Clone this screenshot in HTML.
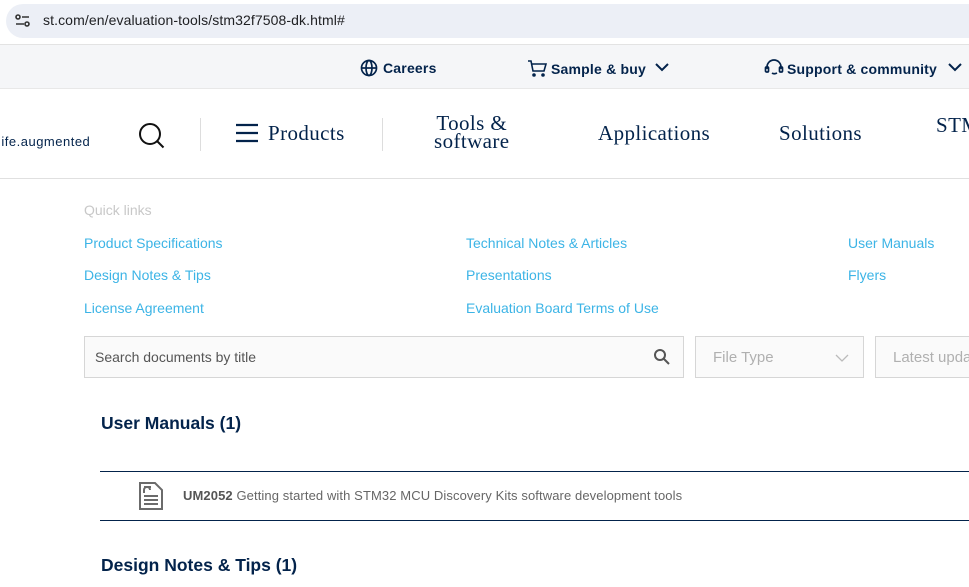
<!DOCTYPE html>
<html><head><meta charset="utf-8"><style>
*{margin:0;padding:0;box-sizing:border-box}
body{width:969px;height:587px;overflow:hidden;background:#fff;font-family:"Liberation Sans",sans-serif;position:relative}
.a{position:absolute;white-space:nowrap}
.pill{left:6px;top:4px;width:980px;height:34px;background:#eceff6;border-radius:17px}
.top{left:0;top:44px;width:969px;height:45px;background:#f5f6f8;border-top:1px solid #e3e3e3;border-bottom:1px solid #e8e8e8}
.tb{font-weight:bold;font-size:14px;color:#03234b;letter-spacing:0.2px}
.nav{font-family:"Liberation Serif","DejaVu Serif",serif;font-size:21px;color:#03234b;letter-spacing:0.4px}
.lk{font-size:14px;color:#3cb4e6}
.sep{width:1px;height:33px;background:#ddd;top:118px}
.box{border:1px solid #d6d6d6;height:42px;top:336px;background:#fafafa;font-size:15px;color:#b0b0b0;padding:12px 0 0 10px}
h2{font-size:17.5px;color:#03234b;font-weight:bold}
</style></head><body>
<div class="a pill"></div>
<svg class="a" style="left:14px;top:13px" width="18" height="16" viewBox="0 0 18 16"><circle cx="4" cy="4" r="2" fill="none" stroke="#333" stroke-width="1.6"/><path d="M8 4h7M2 11h8" stroke="#333" stroke-width="1.6"/><circle cx="13" cy="11" r="2" fill="none" stroke="#333" stroke-width="1.6"/></svg>
<div class="a" style="left:43px;top:12px;font-size:14px;color:#202124;letter-spacing:0.1px">st.com/en/evaluation-tools/stm32f7508-dk.html#</div>
<div class="a top"></div>
<svg class="a" style="left:360px;top:59px" width="18" height="18" viewBox="0 0 18 18" fill="none" stroke="#03234b" stroke-width="1.7"><circle cx="9" cy="9" r="7.5"/><ellipse cx="9" cy="9" rx="3" ry="7.5"/><path d="M1.5 9h15"/></svg>
<div class="a tb" style="left:383px;top:60px">Careers</div>
<svg class="a" style="left:527px;top:59px" width="20" height="19" viewBox="0 0 20 19" fill="none" stroke="#03234b" stroke-width="1.6"><path d="M1 2h3l2 10h11l2-7H5"/><circle cx="7" cy="16" r="1" fill="#03234b"/><circle cx="16" cy="16" r="1" fill="#03234b"/></svg>
<div class="a tb" style="left:551px;top:61px">Sample &amp; buy</div>
<svg class="a" style="left:655px;top:62px" width="14" height="10" viewBox="0 0 14 10" fill="none" stroke="#03234b" stroke-width="2"><path d="M1 2l6 6 6-6"/></svg>
<svg class="a" style="left:764px;top:58px" width="20" height="20" viewBox="0 0 20 20" fill="none" stroke="#03234b" stroke-width="1.7"><path d="M3 11V9a7 7 0 0 1 14 0v2"/><rect x="1.5" y="9" width="3" height="5" rx="1"/><rect x="15.5" y="9" width="3" height="5" rx="1"/><path d="M8 15q2 1.5 5 0"/></svg>
<div class="a tb" style="left:787px;top:61px">Support &amp; community</div>
<svg class="a" style="left:948px;top:62px" width="14" height="10" viewBox="0 0 14 10" fill="none" stroke="#03234b" stroke-width="2"><path d="M1 2l6 6 6-6"/></svg>
<div class="a" style="left:0;top:178px;width:969px;height:1px;background:#e0e0e0"></div>
<div class="a" style="left:-2px;top:134px;font-size:13px;color:#03234b;letter-spacing:0.5px">life.augmented</div>
<svg class="a" style="left:137px;top:121px" width="30" height="30" viewBox="0 0 30 30" fill="none" stroke="#111" stroke-width="2"><circle cx="13" cy="13" r="10"/><path d="M20.5 20.5l6 6"/></svg>
<div class="a sep" style="left:200px"></div>
<svg class="a" style="left:236px;top:123px" width="22" height="20" viewBox="0 0 22 20" stroke="#03234b" stroke-width="2.2"><path d="M0 2h22M0 10h22M0 18h22"/></svg>
<div class="a nav" style="left:268px;top:121px">Products</div>
<div class="a sep" style="left:382px"></div>
<div class="a nav" style="left:434px;top:114px;line-height:18px;text-align:center">Tools &amp;<br>software</div>
<div class="a nav" style="left:598px;top:121px">Applications</div>
<div class="a nav" style="left:779px;top:121px">Solutions</div>
<div class="a nav" style="left:936px;top:113px">STM</div>
<div class="a" style="left:84px;top:202px;font-size:14px;color:#c8c8c8">Quick links</div>
<div class="a lk" style="left:84px;top:235px">Product Specifications</div>
<div class="a lk" style="left:84px;top:267px">Design Notes &amp; Tips</div>
<div class="a lk" style="left:84px;top:300px">License Agreement</div>
<div class="a lk" style="left:466px;top:235px">Technical Notes &amp; Articles</div>
<div class="a lk" style="left:466px;top:267px">Presentations</div>
<div class="a lk" style="left:466px;top:300px">Evaluation Board Terms of Use</div>
<div class="a lk" style="left:848px;top:235px">User Manuals</div>
<div class="a lk" style="left:848px;top:267px">Flyers</div>
<div class="a box" style="left:84px;width:600px;color:#555;font-size:14px;padding-top:12px">Search documents by title</div>
<svg class="a" style="left:653px;top:348px" width="18" height="18" viewBox="0 0 18 18" fill="none" stroke="#555" stroke-width="2"><circle cx="7" cy="7" r="5"/><path d="M11 11l5 5"/></svg>
<div class="a box" style="left:695px;width:169px;padding-left:17px">File Type</div>
<svg class="a" style="left:835px;top:354px" width="14" height="9" viewBox="0 0 14 9" fill="none" stroke="#bbb" stroke-width="1.3"><path d="M1 1l6 6 6-6"/></svg>
<div class="a box" style="left:875px;width:110px;padding-left:17px">Latest updates</div>
<h2 class="a" style="left:101px;top:413px">User Manuals (1)</h2>
<div class="a" style="left:100px;top:471px;width:869px;height:1px;background:#03234b"></div>
<svg class="a" style="left:138px;top:482px" width="26" height="28" viewBox="0 0 26 28"><path d="M2 1h15l7 7v19H2z" fill="#fff" stroke="#6b6b6b" stroke-width="2"/><path d="M6 5h7M6 14h14M6 18h14M6 22h14" stroke="#6b6b6b" stroke-width="2"/><path d="M6 11v-3a3 3 0 0 1 6 0" fill="none" stroke="#6b6b6b" stroke-width="2"/></svg>
<div class="a" style="left:183px;top:488px;font-size:13px;color:#666;letter-spacing:0.1px"><b style="color:#555">UM2052</b> Getting started with STM32 MCU Discovery Kits software development tools</div>
<div class="a" style="left:100px;top:520px;width:869px;height:1px;background:#03234b"></div>
<h2 class="a" style="left:101px;top:555px">Design Notes &amp; Tips (1)</h2>
</body></html>
